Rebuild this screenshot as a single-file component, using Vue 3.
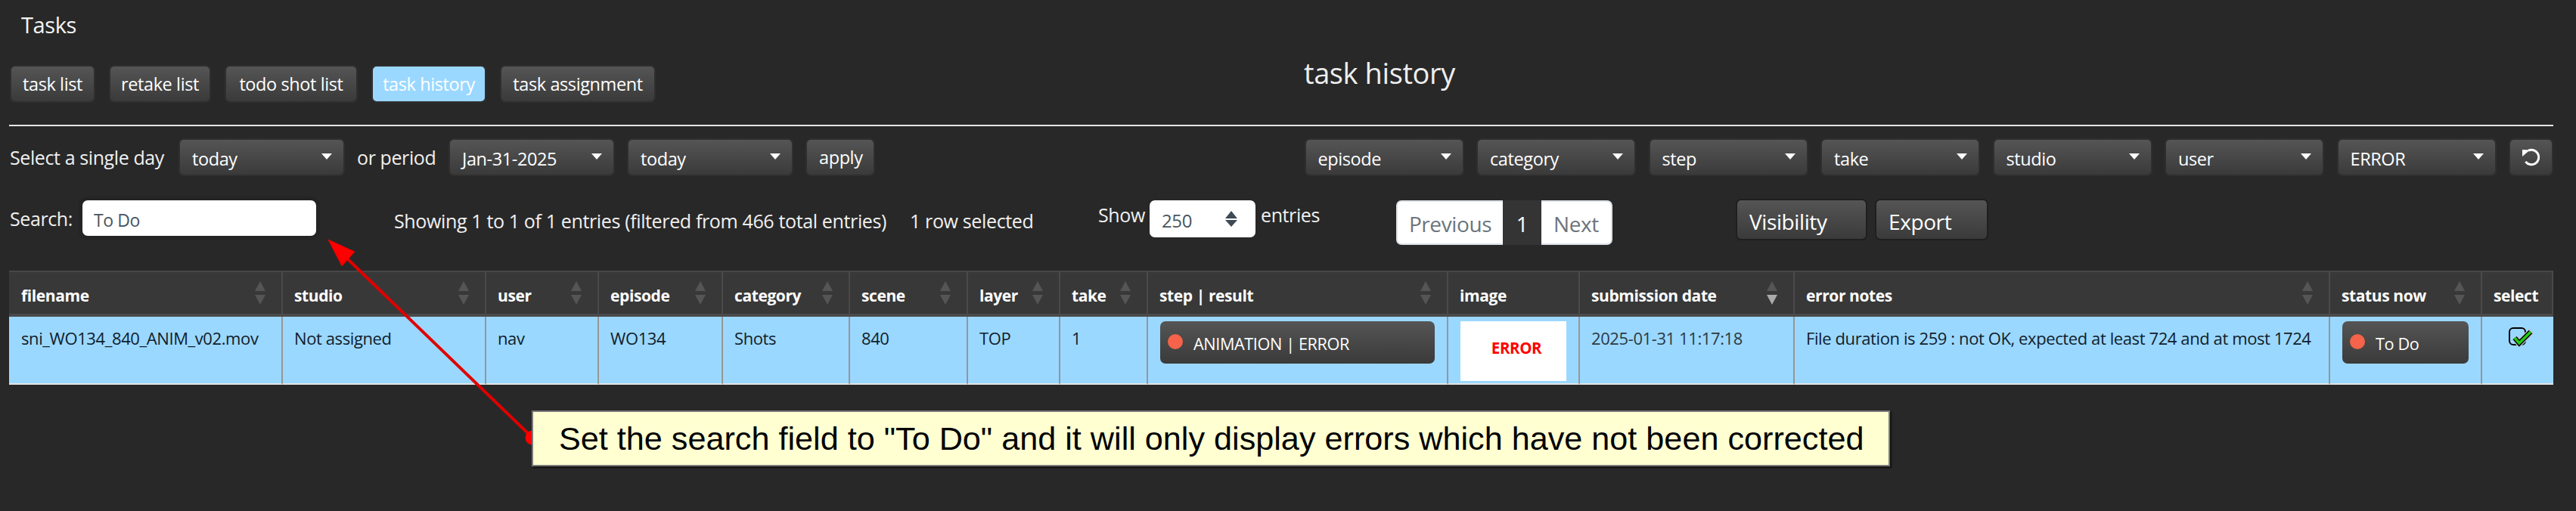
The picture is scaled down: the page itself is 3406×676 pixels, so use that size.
<script setup>
const tabs = [
  { label: 'task list', width: 113 },
  { label: 'retake list', width: 135 },
  { label: 'todo shot list', width: 176 },
  { label: 'task history', width: 152, active: true },
  { label: 'task assignment', width: 206 },
]

const filters = ['episode', 'category', 'step', 'take', 'studio', 'user', 'ERROR']

const columns = [
  { label: 'filename', width: 362, sort: true },
  { label: 'studio', width: 269, sort: true },
  { label: 'user', width: 149, sort: true },
  { label: 'episode', width: 164, sort: true },
  { label: 'category', width: 168, sort: true },
  { label: 'scene', width: 156, sort: true },
  { label: 'layer', width: 122, sort: true },
  { label: 'take', width: 116, sort: true },
  { label: 'step | result', width: 397, sort: true },
  { label: 'image', width: 174, sort: false },
  { label: 'submission date', width: 284, sort: true, desc: true },
  { label: 'error notes', width: 708, sort: true },
  { label: 'status now', width: 201, sort: true },
  { label: 'select', width: 94, sort: false },
]
</script>

<template>
  <div class="page">
    <h1 class="page-title">Tasks</h1>

    <div class="tab-row">
      <div class="tabs">
        <button
          v-for="tab in tabs"
          :key="tab.label"
          class="btn tab"
          :class="{ active: tab.active }"
          :style="{ width: tab.width + 'px' }"
        >
          {{ tab.label }}
        </button>
      </div>
      <h2 class="view-title">task history</h2>
    </div>

    <hr class="rule" />

    <div class="filter-row">
      <div class="group">
        <span class="label first">Select a single day</span>
        <div class="btn drop date"><span>today</span><i class="caret"></i></div>
        <span class="label period">or period</span>
        <div class="btn drop date"><span>Jan-31-2025</span><i class="caret"></i></div>
        <div class="btn drop date"><span>today</span><i class="caret"></i></div>
        <button class="btn apply">apply</button>
      </div>
      <div class="group">
        <div v-for="f in filters" :key="f" class="btn drop filter"><span>{{ f }}</span><i class="caret"></i></div>
        <button class="btn reset">
          <svg width="26" height="26" viewBox="0 0 26 26" fill="none" stroke="#fff" stroke-width="3">
            <path d="M9 4.2 A9.7 9.7 0 1 1 5.3 18.8" />
            <path d="M1 3 L11 3.5 L1 12 Z" fill="#fff" stroke="none" />
          </svg>
        </button>
      </div>
    </div>

    <div class="table-tools">
      <div class="search">
        <label class="label">Search:</label>
        <div class="search-input">To Do</div>
      </div>
      <div class="info">Showing 1 to 1 of 1 entries (filtered from 466 total entries)</div>
      <div class="info selected">1 row selected</div>
      <div class="length">
        <span class="show">Show</span>
        <div class="length-select">
          <span>250</span>
          <svg width="16" height="22" viewBox="0 0 16 22" fill="#3e4a55">
            <path d="M8 0 L16 10 L0 10 Z" />
            <path d="M8 21 L16 12 L0 12 Z" />
          </svg>
        </div>
        <span class="entries">entries</span>
      </div>
      <div class="pager">
        <span class="page-link prev">Previous</span>
        <span class="page-link current">1</span>
        <span class="page-link next">Next</span>
      </div>
      <div class="export-btns">
        <button class="btn big visibility">Visibility</button>
        <button class="btn big export">Export</button>
      </div>
    </div>

    <table class="grid">
      <colgroup>
        <col v-for="c in columns" :key="c.label" :style="{ width: c.width + 'px' }" />
      </colgroup>
      <thead>
        <tr>
          <th v-for="c in columns" :key="c.label">
            {{ c.label }}
            <span v-if="c.sort" class="sort">
              <i class="up"></i>
              <i class="down" :class="{ on: c.desc }"></i>
            </span>
          </th>
        </tr>
      </thead>
      <tbody>
        <tr>
          <td>sni_WO134_840_ANIM_v02.mov</td>
          <td>Not assigned</td>
          <td>nav</td>
          <td>WO134</td>
          <td>Shots</td>
          <td>840</td>
          <td>TOP</td>
          <td>1</td>
          <td class="pad-btn">
            <div class="btn status step"><i class="dot"></i>ANIMATION | ERROR</div>
          </td>
          <td class="pad-btn">
            <div class="thumb"><span>ERROR</span></div>
          </td>
          <td class="date-cell">2025-01-31 11:17:18</td>
          <td>File duration is 259 : not OK, expected at least 724 and at most 1724</td>
          <td class="pad-btn">
            <div class="btn status todo"><i class="dot"></i>To Do</div>
          </td>
          <td class="select-cell">
            <svg width="36" height="28" viewBox="0 0 36 28">
              <rect x="1" y="1" width="21" height="22" rx="5" fill="none" stroke="#000" stroke-width="2" />
              <path d="M8 14 L14 21 L30 5" fill="none" stroke="#b9c3dc" stroke-width="9" stroke-linejoin="round" />
              <path d="M8 14 L14 21 L29 6" fill="none" stroke="#000" stroke-width="6.5" />
              <path d="M8 14 L14 21 L29 6" fill="none" stroke="#22cc11" stroke-width="3.5" />
            </svg>
          </td>
        </tr>
      </tbody>
    </table>

    <svg class="arrow" width="3406" height="676" viewBox="0 0 3406 676">
      <line x1="704" y1="579" x2="460" y2="343" stroke="#e00000" stroke-width="4" />
      <path d="M434 317 L469 333 L452 352 Z" fill="#ff0000" stroke="#e00000" />
      <circle cx="704" cy="579" r="9.5" fill="#ff0000" />
    </svg>

    <div class="callout">Set the search field to "To Do" and it will only display errors which have not been corrected</div>
  </div>
</template>

<style scoped>
.page {
  position: relative;
  width: 3406px;
  height: 676px;
  overflow: hidden;
  box-sizing: border-box;
  padding: 0 30px 0 12px;
  background: #282828;
  color: #f0f0f0;
  font-family: 'Open Sans', sans-serif;
  font-size: 25px;
  letter-spacing: -0.4px;
}

.page-title {
  margin: 0;
  padding: 16px 0 0 16px;
  height: 70px;
  box-sizing: border-box;
  font-size: 29px;
  font-weight: 400;
  line-height: 34px;
  color: #f4f4f4;
}

.tab-row {
  position: relative;
  height: 95px;
  display: flex;
}

.tabs {
  display: flex;
  gap: 18px;
  padding: 16px 0 0 1px;
  height: 50px;
}

.view-title {
  margin: 0;
  position: absolute;
  left: 1712px;
  top: 3px;
  font-size: 38px;
  font-weight: 400;
  line-height: 46px;
  color: #eee;
}

.btn {
  box-sizing: border-box;
  height: 50px;
  padding: 0 16px;
  display: flex;
  align-items: center;
  border: 2px solid #2f2f2f;
  border-radius: 7px;
  background: linear-gradient(#555555, #3a3a3a);
  color: #fff;
  font: inherit;
  font-size: 23.5px;
  letter-spacing: inherit;
}

.tab {
  justify-content: center;
  padding: 0;
}

.tab.active {
  background: #9bd8ff;
}

.rule {
  margin: 0;
  height: 2px;
  border: none;
  background: #e6e6e6;
}

.filter-row {
  display: flex;
  justify-content: space-between;
  padding-top: 16px;
  height: 98px;
  box-sizing: border-box;
}

.group {
  display: flex;
  align-items: center;
  height: 50px;
}

.label.first {
  width: 223px;
  margin-left: 1px;
}

.label.period {
  width: 121px;
}

.drop {
  position: relative;
}

.drop > span {
  padding-top: 4px;
}

.date {
  width: 220px;
  margin-right: 16px;
}

.filter {
  width: 211px;
  margin-right: 16.5px;
}

.apply {
  width: 92px;
}

.caret {
  position: absolute;
  right: 15px;
  top: 18px;
  width: 0;
  height: 0;
  border-left: 7px solid transparent;
  border-right: 7px solid transparent;
  border-top: 8px solid #fff;
}

.reset {
  width: 59px;
  padding: 0;
  justify-content: center;
}

.table-tools {
  position: relative;
  height: 93px;
}

.search {
  position: absolute;
  left: 1px;
  top: 0;
  display: flex;
  align-items: center;
}

.search .label {
  width: 96px;
}

.search-input {
  box-sizing: border-box;
  width: 309px;
  height: 47px;
  padding: 5px 15px 0;
  display: flex;
  align-items: center;
  background: #fff;
  border-radius: 7px;
  color: #4a5560;
  font-size: 23px;
  box-shadow: 0 0 0 5px #242424;
}

.info {
  position: absolute;
  left: 509px;
  top: 12px;
  font-size: 25.1px;
  line-height: 30px;
  white-space: nowrap;
}

.selected {
  left: 1191px;
}

.length {
  position: absolute;
  left: 1440px;
  top: 0;
  display: flex;
}

.show {
  width: 68px;
  line-height: 38px;
}

.entries {
  margin-left: 7px;
  line-height: 38px;
}

.length-select {
  box-sizing: border-box;
  width: 140px;
  height: 49px;
  padding: 4px 24px 0 16px;
  display: flex;
  align-items: center;
  justify-content: space-between;
  background: #fff;
  border-radius: 7px;
  color: #4a5560;
  font-size: 24px;
}

.length-select svg {
  margin-top: -4px;
}

.pager {
  position: absolute;
  left: 1834px;
  top: 0;
  display: flex;
  height: 59px;
  box-sizing: border-box;
  background: #fff;
  border: 2px solid #dee2e6;
  border-radius: 7px;
  color: #6c757d;
  font-size: 28px;
}

.page-link {
  display: flex;
  align-items: center;
  justify-content: center;
  padding-top: 2px;
}

.prev {
  width: 139px;
}

.next {
  width: 92px;
}

.page-link.current {
  width: 51px;
  background: #343434;
  color: #fff;
  margin: -2px 0;
}

.export-btns {
  position: absolute;
  left: 2283px;
  top: -2px;
  display: flex;
  gap: 10px;
}

.big {
  height: 55px;
  font-size: 28px;
  border-color: #1f1f1f;
  padding: 4px 15px 0 16px;
}

.visibility {
  width: 174px;
}

.export {
  width: 150px;
}

.grid {
  width: 3364px;
  table-layout: fixed;
  border-collapse: separate;
  border-spacing: 0;
  margin-top: 0;
}

.grid th {
  position: relative;
  box-sizing: border-box;
  height: 61px;
  padding: 6px 0 0 15px;
  text-align: left;
  font-size: 21px;
  font-weight: 700;
  color: #fff;
  background: #383838;
  border-top: 2px solid #474747;
  border-right: 2px solid #4a4a4a;
  border-bottom: 4px solid #4a4a4a;
}

.grid th:first-child,
.grid td:first-child {
  padding-left: 16px;
}

.sort {
  position: absolute;
  right: 21px;
  top: 12px;
}

.sort i {
  display: block;
  width: 0;
  height: 0;
  border-left: 7.5px solid transparent;
  border-right: 7.5px solid transparent;
}

.sort .up {
  border-bottom: 13px solid #555;
  margin-bottom: 5px;
}

.sort .down {
  border-top: 13px solid #555;
}

.sort .down.on {
  border-top-color: #aaa;
}

.grid td {
  box-sizing: border-box;
  height: 90px;
  padding: 13px 0 0 15px;
  vertical-align: top;
  font-size: 22px;
  line-height: 30px;
  color: #10202c;
  background: #9bd8ff;
  border-right: 2px solid #969696;
  border-bottom: 2px solid #e4e4e4;
  white-space: nowrap;
}

.grid td.pad-btn {
  padding: 6px 0 0 16px;
}

.grid td.date-cell {
  color: #2c3a45;
}

.grid td.select-cell {
  padding: 14px 0 0 35px;
  border-right: 0;
}

.status {
  height: 56px;
  padding: 4px 0 0 10px;
  border: none;
  gap: 14px;
  font-size: 21.7px;
  font-weight: 400;
  line-height: 30px;
  border-radius: 7px;
}

.status .dot {
  width: 20px;
  height: 20px;
  margin-top: -6px;
  border-radius: 50%;
  background: #f4634a;
}

.step {
  width: 363px;
}

.todo {
  width: 167px;
}

.thumb {
  width: 140px;
  height: 79px;
  background: #fff;
  display: flex;
  justify-content: center;
  padding: 20px 0 0 8px;
  box-sizing: border-box;
  color: #ff0000;
  font-weight: 700;
  font-size: 20.5px;
}

.arrow {
  position: absolute;
  left: 0;
  top: 0;
  pointer-events: none;
}

.callout {
  position: absolute;
  left: 703px;
  top: 543px;
  box-sizing: border-box;
  width: 1796px;
  height: 74px;
  padding-left: 34px;
  display: flex;
  align-items: center;
  background: #ffffd2;
  border: 2px solid #7a7a7a;
  box-shadow: 2px 2px 2px #111;
  color: #000;
  font-family: 'Liberation Sans', Arial, sans-serif;
  font-size: 43.2px;
  letter-spacing: 0;
  white-space: nowrap;
}
</style>
